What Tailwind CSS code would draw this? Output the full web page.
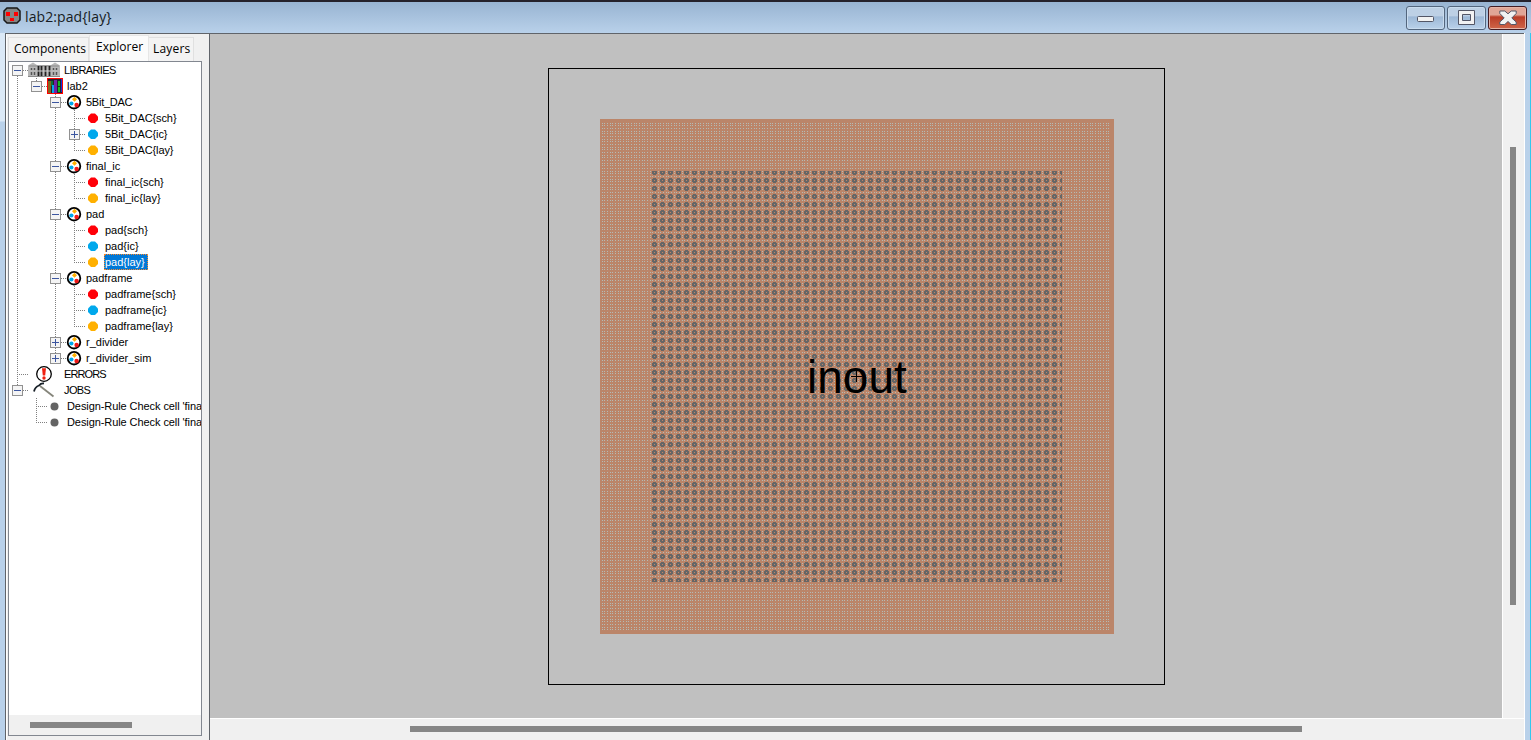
<!DOCTYPE html>
<html lang="en">
<head>
<meta charset="utf-8">
<title>lab2:pad{lay}</title>
<script src="https://cdn.jsdelivr.net/npm/@tailwindcss/browser@4"></script>
</head>
<body class="w-[1531px] h-[740px] overflow-hidden bg-[#b9d1ea] font-['Liberation_Sans',Arial,sans-serif] text-black">
<div class="w-full h-full flex flex-col border-t-2 border-[#25222b]">
  <header class="h-[31px] shrink-0 flex items-start bg-linear-to-b from-[#98b4d2] to-[#b9d1ea] pl-[3px] pr-[4px]">
    <svg class="w-[18px] h-[18px] mt-[5px] shrink-0" viewBox="0 0 18 18"><path d="M4 1h10l3 3v9l-3 3H4l-3-3V4z" fill="#858585" stroke="#171717" stroke-width="1.500"/><path d="M3 5h4v4H3zM11 5h4v4h-4zM7 11h4v3H7z" fill="#f00"/></svg>
    <h1 class="ml-[4px] mt-[4px] text-[14px] leading-[22px] tracking-[0.1px] font-['Open_Sans','Noto_Sans',sans-serif] text-[#161b22] whitespace-nowrap">lab2:pad{lay}</h1>
    <div class="ml-auto mt-[4px] flex gap-[2px]">
      <button class="w-[39px] h-[24px] rounded-[3px] border border-[#53667e] bg-linear-to-b from-[#bdd0e5] from-40% via-[#9db8d6] via-45% to-[#b9d1ea] flex items-center justify-center shadow-[inset_0_0_0_1px_#c9dcef]">
        <svg class="w-[18px] h-[18px]" viewBox="0 0 18 18"><rect x=".5" y="7.500" width="16" height="5" rx="1" fill="#f2f2f2" stroke="#535666"/></svg>
      </button>
      <button class="w-[39px] h-[24px] rounded-[3px] border border-[#53667e] bg-linear-to-b from-[#bdd0e5] from-40% via-[#9db8d6] via-45% to-[#b9d1ea] flex items-center justify-center shadow-[inset_0_0_0_1px_#c9dcef]">
        <svg class="w-[18px] h-[18px]" viewBox="0 0 18 18"><path d="M.5 1.500h16v14H.5zM4.500 5.500h8v6h-8z" fill="#f2f2f2" fill-rule="evenodd" stroke="#535666"/></svg>
      </button>
      <button class="w-[39px] h-[24px] rounded-[3px] border border-[#431b22] bg-linear-to-b from-[#e0a596] from-35% via-[#b93c27] via-45% to-[#cf6549] flex items-center justify-center shadow-[inset_0_0_0_1px_#e5b3a6]">
        <svg class="w-[18px] h-[18px]" viewBox="0 0 18 18"><path d="M.8 2h5L9 4.800 12.200 2h5v2.500L12.800 9l4.400 4v2.500h-5L9 12.500 5.800 15.500h-5V13l4.400-4L.8 4.500z" fill="#f2f2f2" stroke="#535666"/></svg>
      </button>
    </div>
  </header>

  <div class="flex flex-1 min-h-0">
    <div class="w-[5px] shrink-0 bg-[linear-gradient(#dbe9f7_0,#dbe9f7_88px,#b9d1ea_89px)]"></div>
    <main class="flex flex-1 min-w-0 border-l border-t border-[#60646a] bg-[#f0f0f0]">
      <aside class="w-[203px] shrink-0 flex flex-col pl-px pr-[7px] border-l border-white">
        <nav class="flex items-end h-[27px] shrink-0 text-[12px] font-['Open_Sans','Noto_Sans',sans-serif] whitespace-nowrap">
          <div class="w-[81px] h-[24px] pl-[5px] leading-[22px] border border-b-0 border-[#e0e0e0] bg-[#f3f3f3]">Components</div>
          <div class="w-[60px] h-[26px] pl-[6px] leading-[21px] bg-[#fbfbfb] border border-b-0 border-[#e6e6e6]">Explorer</div>
          <div class="w-[45px] h-[24px] pl-[4px] leading-[22px] tracking-[0.2px] border border-l-0 border-b-0 border-[#e0e0e0] bg-[#f3f3f3]">Layers</div>
        </nav>
        <section class="w-[194px] h-[675px] flex flex-col border border-[#828790] bg-white overflow-hidden">
          <div id="tree" class="flex-1 min-h-0 overflow-hidden text-[11px]"></div>
          <div class="h-[20px] shrink-0 bg-[#f0f0f0] pt-[7px] pl-[21px]"><div class="w-[102px] h-[6px] bg-[#868686]"></div></div>
        </section>
      </aside>
      <section class="flex flex-1 min-w-0 flex-col border-l border-[#60646a]">
        <div class="flex h-[684px] shrink-0">
          <svg class="w-[1292px] h-[684px] shrink-0 bg-[#c0c0c0]" viewBox="210 34 1292 684" shape-rendering="crispEdges">
            <defs>
              <pattern id="metal" width="8" height="8" patternUnits="userSpaceOnUse">
                <rect width="8" height="8" fill="#bb8569"/>
                <path d="M2 0h1v1H2zM4 0h1v1H4zM7 0h1v1H7zM2 3h1v1H2zM4 3h1v1H4zM7 3h1v1H7zM2 5h1v1H2zM4 5h1v1H4zM7 5h1v1H7z" fill="#b4bab4"/>
              </pattern>
              <pattern id="cut" width="8" height="8" patternUnits="userSpaceOnUse">
                <path fill-rule="evenodd" d="M5 2h3v5H5zM4 3h1v3H4zM6 4h1v1H6zM0 3h1v3H0z" fill="#666"/>
              </pattern>
            </defs>
            <rect x="548.500" y="68.500" width="616" height="616" fill="none" stroke="#000"/>
            <rect x="600" y="119" width="514" height="515" fill="#bb8569"/>
            <rect x="602" y="122" width="509" height="509" fill="url(#metal)"/>
            <rect x="652" y="171" width="410" height="411" fill="url(#cut)"/>
            <text x="807" y="393" font-size="46" shape-rendering="auto" font-family="Liberation Sans, Arial, sans-serif">inout</text>
            <path d="M851 376.500h11M856.500 371v11" stroke="#000"/>
          </svg>
          <div class="flex-1 bg-[#f0f0f0] border-l border-white pt-[113px] pl-[7px]"><div class="w-[6px] h-[458px] bg-[#868686]"></div></div>
        </div>
        <div class="flex-1 border-t border-white bg-[#f0f0f0] pt-[7px] pl-[200px]"><div class="w-[892px] h-[6px] bg-[#868686]"></div></div>
      </section>
    </main>
    <div class="w-[7px] shrink-0 bg-[#b9d1ea] border-l border-l-white border-r border-r-[#33c8ee]"></div>
  </div>
</div>
<script>
// Guide codes: | line, space empty, T branch, L last branch, F/M/B expanded boxes, P/Q collapsed boxes
const rows = [
  ["F", "lib", "LIBRARIES"],
  ["|M", "book", "lab2"],
  ["| B", "cell", "5Bit_DAC"],
  ["| |T", "red", "5Bit_DAC{sch}"],
  ["| |P", "blue", "5Bit_DAC{ic}"],
  ["| |L", "gold", "5Bit_DAC{lay}"],
  ["| B", "cell", "final_ic"],
  ["| |T", "red", "final_ic{sch}"],
  ["| |L", "gold", "final_ic{lay}"],
  ["| B", "cell", "pad"],
  ["| |T", "red", "pad{sch}"],
  ["| |T", "blue", "pad{ic}"],
  ["| |L", "gold", "pad{lay}", 1],
  ["| B", "cell", "padframe"],
  ["| |T", "red", "padframe{sch}"],
  ["| |T", "blue", "padframe{ic}"],
  ["| |L", "gold", "padframe{lay}"],
  ["| P", "cell", "r_divider"],
  ["| Q", "cell", "r_divider_sim"],
  ["T", "err", "ERRORS"],
  ["M", "job", "JOBS"],
  [" T", "grey", "Design-Rule Check cell 'final"],
  [" L", "grey", "Design-Rule Check cell 'final"]
];
const spacing = { LIBRARIES: "tracking-[-0.65px]", ERRORS: "tracking-[-0.9px]", JOBS: "tracking-[-0.6px]", "5Bit_DAC": "tracking-[-0.25px]",
  "5Bit_DAC{sch}": "tracking-[-0.1px]", "5Bit_DAC{ic}": "tracking-[-0.1px]", "5Bit_DAC{lay}": "tracking-[-0.1px]",
  "Design-Rule Check cell 'final": "tracking-[-0.08px]" };
const dash = 'stroke="#808080" stroke-dasharray="1 1" fill="none"';
function guide(c) {
  let s = "";
  if ("|TBP".includes(c)) s += `<path d="M8.5 0V16" ${dash}/>`;
  if ("LMQ".includes(c)) s += `<path d="M8.5 0V8" ${dash}/>`;
  if (c === "F") s += `<path d="M8.5 8V16" ${dash}/>`;
  if ("TLBPMQF".includes(c)) s += `<path d="M8 8.500H19" ${dash}/>`;
  if ("BMFPQ".includes(c)) s += `<rect x="3.500" y="3.500" width="10" height="10" fill="#f4f4f4" stroke="#919191"/><path d="M5 8.500h7${"PQ".includes(c) ? "M8.5 5v7" : ""}" stroke="#3c56a0"/>`;
  return `<svg class="w-[19px] h-[16px] shrink-0" viewBox="0 0 19 16" shape-rendering="crispEdges">${s}</svg>`;
}
const dot = f => `<svg class="w-[16px] h-[16px] shrink-0" viewBox="0 0 16 16"><path d="M6 3.500h4L13 6.500v3.500L10 13H6L3 10V6.500z" fill="${f}"/></svg>`;
const icons = {
  red: dot("#ff0008"), blue: dot("#00a8ec"), gold: dot("#ffb000"),
  grey: `<svg class="w-[16px] h-[16px] shrink-0" viewBox="0 0 16 16"><circle cx="7.500" cy="8.500" r="4" fill="#646464"/></svg>`,
  cell: `<svg class="w-[16px] h-[16px] shrink-0" viewBox="0 0 16 16"><circle cx="8" cy="8.200" r="6.300" fill="#fff" stroke="#000" stroke-width="1.800"/><path d="M8.500 2.800l2.500 2.500-2.500 2.500L6 5.300z" fill="#ffb000"/><circle cx="5.400" cy="9.500" r="2.100" fill="#00a8ec"/><circle cx="10.600" cy="11" r="2.200" fill="#f01818"/></svg>`,
  book: `<svg class="w-[16px] h-[16px] shrink-0" viewBox="0 0 16 16" shape-rendering="crispEdges"><path d="M0 0h16v16H0z" fill="#f00"/><path d="M1 1h14v14H1z" fill="#20252c"/><path d="M1 3h3v12H1z" fill="#826420"/><path d="M4 3h2v5H4z" fill="#087038"/><path d="M5 7h2v8H5z" fill="#00a8ec"/><path d="M7 2h3v13H7z" fill="#7020a8"/><path d="M11 3h2v5h-2zM11 9h2v5h-2z" fill="#10b820"/><path d="M14 1h1v13h-1z" fill="#1030e0"/></svg>`,
  lib: `<svg class="w-[32px] h-[16px] shrink-0" viewBox="0 0 32 16"><path d="M0 3.500l5-3L9 3h14l4-2.500 5 3V15H0z" fill="#b8b8b8"/><path d="M0 14.500h32M1 4h30" stroke="#8a8a8a"/><path d="M3.500 6v2M6.500 6v2M3.500 10v3M6.500 10v3M25.500 6v2M28.500 6v2M25.500 10v3M28.500 10v3" stroke="#555" stroke-width="1.500"/><path d="M10.500 4v10M13.500 4v10M17.500 4v10M21.500 4v10" stroke="#222" stroke-width="1.800"/><path d="M9 9h14" stroke="#d0d0d0"/></svg>`,
  err: `<svg class="w-[32px] h-[16px] shrink-0" viewBox="0 0 32 16"><circle cx="16" cy="8" r="7.300" fill="#fff" stroke="#000" stroke-width="1.300"/><path d="M14 2.200h4L17.200 9.500h-2.400z" fill="#f02010"/><circle cx="16" cy="12" r="1.700" fill="#f02010"/></svg>`,
  job: `<svg class="w-[32px] h-[16px] shrink-0" viewBox="0 0 32 16"><path d="M12 4l13.500 10.500" stroke="#85857a" stroke-width="1.800"/><path d="M6 9.500Q7 5 11 3.500Q13 1 16 1.500" fill="none" stroke="#182028" stroke-width="1.800"/></svg>`
};
document.getElementById("tree").innerHTML = rows.map(([g, i, t, sel]) =>
  `<div class="flex h-[16px] items-center whitespace-nowrap">${[...g].map(guide).join("")}${icons[i]}<span class="${spacing[t] || ""} ${sel ? "ml-[3px] px-px w-[44px] h-[16px] leading-[16px] bg-[#0078d7] text-white outline-1 outline-dotted outline-[#ff8728] -outline-offset-1" : "ml-[4px] leading-[16px]"}">${t}</span></div>`).join("");
</script>
</body>
</html>
